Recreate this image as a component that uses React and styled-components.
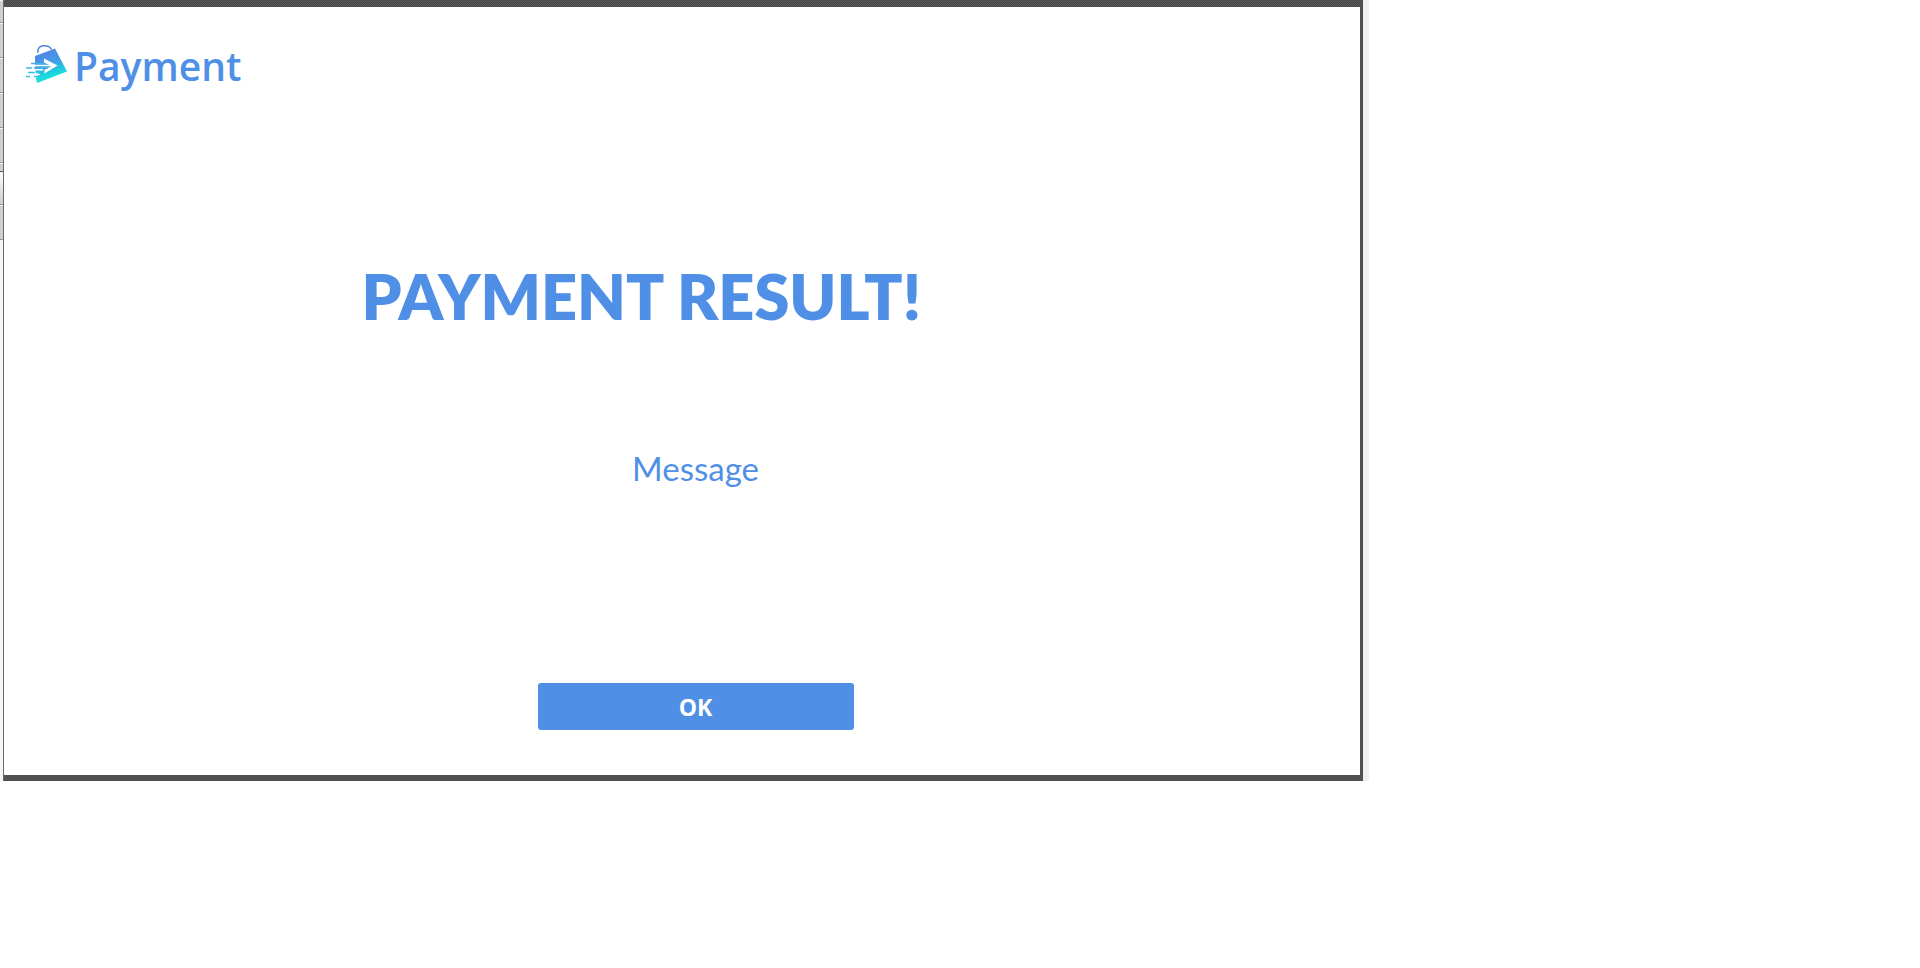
import React from "react";
import styled, { createGlobalStyle } from "styled-components";

const GlobalStyle = createGlobalStyle`
  *, *::before, *::after { box-sizing: border-box; }
  body { margin: 0; background: #fff; }
`;

const Workspace = styled.div`
  display: flex;
  width: 71.3%;
  min-height: 781px;
`;

const Rail = styled.div`
  display: flex;
  flex-direction: column;
  width: 3px;
  background: #f5f5f5;
`;

const RailCell = styled.div`
  height: ${(p) => p.$height}px;
  background: ${(p) => p.$fill || "#cfcfcf"};
  border-bottom: 1px solid ${(p) => p.$edge || "#989898"};
  box-shadow: inset 0 1px #f4f4f4;
`;

const Frame = styled.div`
  flex: 1;
  display: flex;
  padding: 7px 3px 6px 0;
  background: repeating-conic-gradient(#484848 0 25%, #585858 0 50%) 0 0 / 2px 2px;
  border-left: 1px solid #696969;
`;

const Gutter = styled.div`
  width: 6px;
  background: #f0f0f0;
`;

const Panel = styled.main`
  flex: 1;
  display: flex;
  flex-direction: column;
  background: #fff;
  color: #4f90e6;
  font-family: Lato, "Liberation Sans", sans-serif;
`;

const Brand = styled.header`
  display: flex;
  align-items: center;
  gap: 4px;
  padding: 31px 20px 0;
`;

const BrandName = styled.span`
  font: 600 39px/56px "Open Sans", "Noto Sans", sans-serif;
`;

const Title = styled.h1`
  margin: 162px 0 0;
  padding-right: 6%;
  text-align: center;
  font-size: 63px;
  line-height: 80px;
  font-weight: 800;
`;

const Message = styled.p`
  margin: 112px 0 0;
  padding-left: 2%;
  text-align: center;
  font-size: 33px;
  line-height: 40px;
`;

const Actions = styled.div`
  display: flex;
  justify-content: center;
  margin-top: 195px;
  padding-left: 2%;
`;

const OkButton = styled.button`
  width: 316px;
  height: 47px;
  padding: 0;
  border: 0;
  border-radius: 3px;
  background: #4f90e6;
  color: #fff;
  font: 700 23px/32px "Open Sans", "Noto Sans", sans-serif;
  cursor: pointer;
`;

const BagLogo = () => (
  <svg width="46" height="44" viewBox="0 0 46 44" aria-hidden="true">
    <defs>
      <linearGradient id="bag" x1="0" y1="0" x2="0.25" y2="1">
        <stop offset="0.25" stopColor="#4f8ae4" />
        <stop offset="0.5" stopColor="#3f9fe4" />
        <stop offset="0.85" stopColor="#18dcdc" />
      </linearGradient>
    </defs>
    <path d="M14 9C13 4 16 1.700 20 1.700S26.500 3 27.500 5.500" fill="none" stroke="#4a80dc" strokeWidth="1.400" />
    <path d="M11 12 31 4.500 43 27.500 13 39 12 34 15 30 11 27Z" fill="url(#bag)" />
    <path d="M20 14.500 33.500 21.500 20.500 29.500V26L27.500 22 20 18.500Z" fill="#fff" />
    <path d="M8 21.500H27M8 25.800H19" stroke="#fff" strokeWidth="1.500" />
    <path d="M10 30.500H16" stroke="#fff" strokeWidth="1.300" />
    <path d="M7 19.500H20M2 24H8M10 24H24" stroke="#48aee6" strokeWidth="1.500" />
    <path d="M4 28.500H11M12 28.500H18M2 32.500H6M10 32.500H15" stroke="#2fc4e2" strokeWidth="1.500" />
  </svg>
);

const railCells = [
  { $height: 23 },
  { $height: 35 },
  { $height: 35 },
  { $height: 35 },
  { $height: 35 },
  { $height: 9, $edge: "#5c5c5c" },
  { $height: 33, $fill: "linear-gradient(#fff, #ccc)" },
  { $height: 35 },
];

export default function App() {
  return (
    <>
      <GlobalStyle />
      <Workspace>
        <Rail aria-hidden="true">
          {railCells.map((cell, i) => (
            <RailCell key={i} {...cell} />
          ))}
        </Rail>
        <Frame>
          <Panel>
            <Brand>
              <BagLogo />
              <BrandName>Payment</BrandName>
            </Brand>
            <Title>PAYMENT RESULT!</Title>
            <Message>Message</Message>
            <Actions>
              <OkButton type="button">OK</OkButton>
            </Actions>
          </Panel>
        </Frame>
        <Gutter />
      </Workspace>
    </>
  );
}
